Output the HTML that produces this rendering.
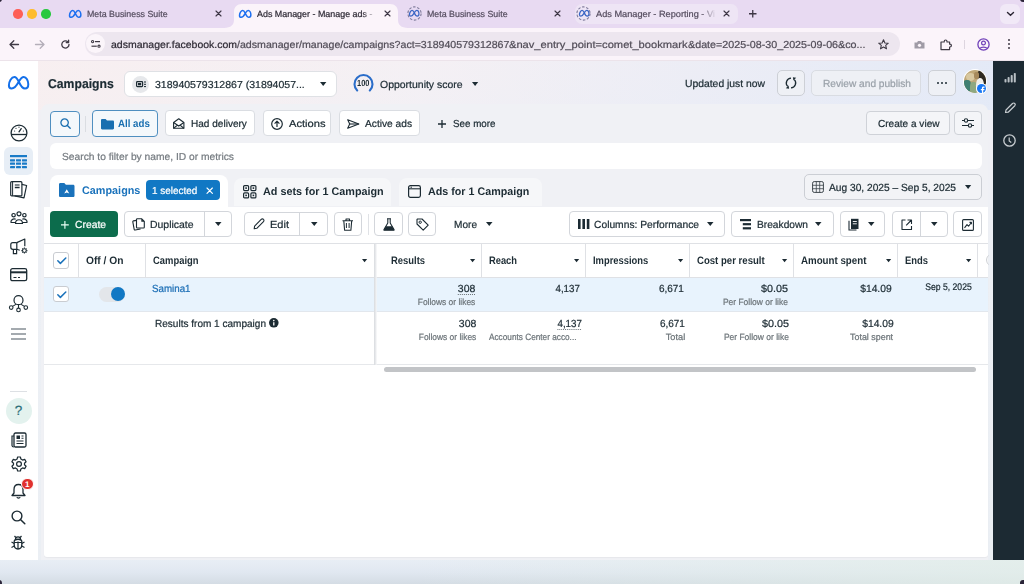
<!DOCTYPE html>
<html><head><meta charset="utf-8"><style>
html,body{margin:0;padding:0;}
body{width:1024px;height:584px;overflow:hidden;position:relative;background:#e4e9ef;font-family:"Liberation Sans", sans-serif;}
.t{position:absolute;white-space:nowrap;font-family:"Liberation Sans", sans-serif;text-rendering:geometricPrecision;} .t.r{-webkit-text-stroke:0.22px currentColor;} .t.b{-webkit-text-stroke:0px currentColor;}
svg{overflow:visible}
</style></head><body>
<div style="position:absolute;left:0px;top:560px;width:1024px;height:24px;background:linear-gradient(180deg,#e8eef5 0%,#e1e8f1 50%,#d4dce4 100%);"></div><div style="position:absolute;left:0px;top:560px;width:1024px;height:24px;background:linear-gradient(90deg,rgba(226,232,240,0) 0%,rgba(226,232,240,0) 40%,rgba(226,238,232,0.75) 100%);"></div><div style="position:absolute;left:-4px;top:580px;width:6px;height:6px;border-radius:50%;background:#2a2438;"></div><div style="position:absolute;left:1020px;top:580px;width:6px;height:6px;border-radius:50%;background:#2a2438;"></div><div style="position:absolute;left:38px;top:60px;width:955px;height:500px;background:linear-gradient(180deg,#f4f0f4 0px,#f0f0f5 60px,#edf0f5 200px,#ebeff4 500px);"></div><div style="position:absolute;left:38px;top:60px;width:955px;height:50px;background:linear-gradient(90deg,rgba(250,238,238,0.6) 0%,rgba(246,240,244,0.3) 40%,rgba(226,233,247,0.9) 100%);"></div><div style="position:absolute;left:0px;top:0px;width:1024px;height:28px;background:#e8daf2;"></div><div style="position:absolute;left:-4px;top:-4px;width:6px;height:6px;border-radius:50%;background:#2a2438;"></div><div style="position:absolute;left:1020px;top:-4px;width:6px;height:6px;border-radius:50%;background:#2a2438;"></div><div style="position:absolute;left:13.2px;top:9.2px;width:9.4px;height:9.4px;border-radius:50%;background:#fe5f57;"></div><div style="position:absolute;left:27.2px;top:9.2px;width:9.4px;height:9.4px;border-radius:50%;background:#febc2e;"></div><div style="position:absolute;left:41.2px;top:9.2px;width:9.4px;height:9.4px;border-radius:50%;background:#28c840;"></div><svg style="position:absolute;left:69.3px;top:9.8px;" width="12.4" height="7.9" viewBox="0 0 21.2 13.5"><path d="M6.4 0.9C8.3 0.9 9.5 3 10.7 5.5C12.5 9.5 14.5 12.6 17 12.6C19.2 12.6 20.3 10.5 20.3 8.3C20.3 4.5 18.3 0.9 15.8 0.9C13.5 0.9 12 3.5 10.7 5.8C9 9 6.5 12.6 3.6 12.6C2 12.6 0.9 11.3 0.9 9.2C0.9 5.5 3.5 0.9 6.4 0.9Z" fill="none" stroke="#1d6ff0" stroke-width="2.6" stroke-linejoin="round"/></svg><span class="t r" style="transform:scaleX(0.9909);transform-origin:left center;left:87.4px;top:10px;font-size:8.93px;line-height:8.93px;font-weight:400;color:#564e60;">Meta Business Suite</span><svg style="position:absolute;left:215.7px;top:11.4px;" width="5.0" height="5.0" viewBox="0 0 5.0 5.0"><path d="M0 0L5.0 5.0M5.0 0L0 5.0" stroke="#3d3645" stroke-width="1.15" stroke-linecap="round"/></svg><svg style="position:absolute;left:222px;top:3px" width="188" height="26" viewBox="0 0 188 26"><path d="M0 25 C6 25 12 24 12 17 L12 9 C12 4 15 1 20 1 L168 1 C173 1 176 4 176 9 L176 17 C176 24 182 25 188 25 L188 26 L0 26 Z" fill="#fbf4fa"/></svg><svg style="position:absolute;left:238.8px;top:9.6px;" width="12.4" height="7.9" viewBox="0 0 21.2 13.5"><path d="M6.4 0.9C8.3 0.9 9.5 3 10.7 5.5C12.5 9.5 14.5 12.6 17 12.6C19.2 12.6 20.3 10.5 20.3 8.3C20.3 4.5 18.3 0.9 15.8 0.9C13.5 0.9 12 3.5 10.7 5.8C9 9 6.5 12.6 3.6 12.6C2 12.6 0.9 11.3 0.9 9.2C0.9 5.5 3.5 0.9 6.4 0.9Z" fill="none" stroke="#1d6ff0" stroke-width="2.6" stroke-linejoin="round"/></svg><span class="t r" style="transform:scaleX(0.9986);transform-origin:left center;left:256.6px;top:10px;font-size:8.93px;line-height:8.93px;font-weight:400;color:#2f2b36;-webkit-mask-image:linear-gradient(90deg,#000 91%,rgba(0,0,0,0.25) 100%);">Ads Manager - Manage ads -</span><svg style="position:absolute;left:385.0px;top:10.9px;" width="5.0" height="5.0" viewBox="0 0 5.0 5.0"><path d="M0 0L5.0 5.0M5.0 0L0 5.0" stroke="#3d3645" stroke-width="1.15" stroke-linecap="round"/></svg><svg style="position:absolute;left:407.1px;top:5.800000000000001px;" width="15" height="15" viewBox="0 0 15 15"><circle cx="7.5" cy="7.5" r="6.6" fill="none" stroke="#7d7a9a" stroke-width="1.1" stroke-dasharray="2.6 1.6"/></svg><svg style="position:absolute;left:409.40000000000003px;top:10.0px;" width="10.4" height="6.6" viewBox="0 0 21.2 13.5"><path d="M6.4 0.9C8.3 0.9 9.5 3 10.7 5.5C12.5 9.5 14.5 12.6 17 12.6C19.2 12.6 20.3 10.5 20.3 8.3C20.3 4.5 18.3 0.9 15.8 0.9C13.5 0.9 12 3.5 10.7 5.8C9 9 6.5 12.6 3.6 12.6C2 12.6 0.9 11.3 0.9 9.2C0.9 5.5 3.5 0.9 6.4 0.9Z" fill="none" stroke="#3a66c4" stroke-width="2.6" stroke-linejoin="round"/></svg><span class="t r" style="transform:scaleX(0.9909);transform-origin:left center;left:426.6px;top:10px;font-size:8.93px;line-height:8.93px;font-weight:400;color:#564e60;">Meta Business Suite</span><svg style="position:absolute;left:554.5px;top:11.1px;" width="5.0" height="5.0" viewBox="0 0 5.0 5.0"><path d="M0 0L5.0 5.0M5.0 0L0 5.0" stroke="#3d3645" stroke-width="1.15" stroke-linecap="round"/></svg><div style="position:absolute;left:575px;top:4px;width:163px;height:20px;background:#eee5f5;border-radius:7px;"></div><svg style="position:absolute;left:576.2px;top:6.199999999999999px;" width="15" height="15" viewBox="0 0 15 15"><circle cx="7.5" cy="7.5" r="6.6" fill="none" stroke="#7d7a9a" stroke-width="1.1" stroke-dasharray="2.6 1.6"/></svg><svg style="position:absolute;left:578.5px;top:10.399999999999999px;" width="10.4" height="6.6" viewBox="0 0 21.2 13.5"><path d="M6.4 0.9C8.3 0.9 9.5 3 10.7 5.5C12.5 9.5 14.5 12.6 17 12.6C19.2 12.6 20.3 10.5 20.3 8.3C20.3 4.5 18.3 0.9 15.8 0.9C13.5 0.9 12 3.5 10.7 5.8C9 9 6.5 12.6 3.6 12.6C2 12.6 0.9 11.3 0.9 9.2C0.9 5.5 3.5 0.9 6.4 0.9Z" fill="none" stroke="#3a66c4" stroke-width="2.6" stroke-linejoin="round"/></svg><span class="t r" style="transform:scaleX(1.0313);transform-origin:left center;left:596px;top:10px;font-size:8.93px;line-height:8.93px;font-weight:400;color:#564e60;-webkit-mask-image:linear-gradient(90deg,#000 88%,rgba(0,0,0,0.15) 100%);">Ads Manager - Reporting - Vi</span><svg style="position:absolute;left:723.8px;top:11.1px;" width="5.0" height="5.0" viewBox="0 0 5.0 5.0"><path d="M0 0L5.0 5.0M5.0 0L0 5.0" stroke="#3d3645" stroke-width="1.15" stroke-linecap="round"/></svg><svg style="position:absolute;left:749px;top:10px;" width="7.5" height="7.5" viewBox="0 0 7.5 7.5"><path d="M3.75 0V7.5M0 3.75H7.5" stroke="#3d3645" stroke-width="1.3"/></svg><div style="position:absolute;left:1000px;top:4px;width:20px;height:19.5px;background:#f1e9f7;border-radius:6px;"></div><svg style="position:absolute;left:1006.5px;top:11.8px;" width="7" height="4" viewBox="0 0 7 4"><path d="M0.5 0.5L3.5 3.3L6.5 0.5" fill="none" stroke="#2b2633" stroke-width="1.4" stroke-linecap="round"/></svg><div style="position:absolute;left:0px;top:28px;width:1024px;height:32px;background:#fbf4fa;"></div><div style="position:absolute;left:0px;top:59.5px;width:1024px;height:1.0px;background:#ece3ea;"></div><svg style="position:absolute;left:9px;top:39.5px;" width="10" height="9" viewBox="0 0 10 9"><path d="M9.5 4.5H1M4.8 0.8L1 4.5L4.8 8.2" fill="none" stroke="#3f3a45" stroke-width="1.3" stroke-linecap="round" stroke-linejoin="round"/></svg><svg style="position:absolute;left:34.5px;top:39.5px;" width="10" height="9" viewBox="0 0 10 9"><path d="M0.5 4.5H9M5.2 0.8L9 4.5L5.2 8.2" fill="none" stroke="#b4aeb9" stroke-width="1.3" stroke-linecap="round" stroke-linejoin="round"/></svg><svg style="position:absolute;left:60.5px;top:39.5px;" width="9" height="9" viewBox="0 0 9 9"><path d="M8 4.5A3.6 3.6 0 1 1 6.9 1.9" fill="none" stroke="#3f3a45" stroke-width="1.3" stroke-linecap="round"/><path d="M7.6 0.2V2.6H5.2" fill="none" stroke="#3f3a45" stroke-width="1.3" stroke-linecap="round" stroke-linejoin="round"/></svg><div style="position:absolute;left:84.7px;top:32px;width:815.3px;height:24px;background:#ede6ef;border-radius:12px;"></div><div style="position:absolute;left:86.1px;top:34.3px;width:19px;height:19px;border-radius:50%;background:#fbf5fa;"></div><svg style="position:absolute;left:91px;top:40px;" width="10" height="8" viewBox="0 0 10 8"><circle cx="1.6" cy="1.6" r="1.1" fill="none" stroke="#3f3a45" stroke-width="1.1"/><path d="M4 1.6H9" stroke="#3f3a45" stroke-width="1.2"/><circle cx="8" cy="6.2" r="1.1" fill="none" stroke="#3f3a45" stroke-width="1.1"/><path d="M0.5 6.2H5.8" stroke="#3f3a45" stroke-width="1.2"/></svg><span class="t r" style="transform:scaleX(1.0324);transform-origin:left center;left:110.5px;top:41px;font-size:10.18px;line-height:10.18px;font-weight:400;color:#2e2a34;">adsmanager.facebook.com</span><span class="t r" style="transform:scaleX(1.0437);transform-origin:left center;left:236.6px;top:41px;font-size:10.18px;line-height:10.18px;font-weight:400;color:#524d58;">/adsmanager/manage/campaigns?act=318940579312867</span><span class="t r" style="transform:scaleX(1.0941);transform-origin:left center;left:509px;top:41px;font-size:10.18px;line-height:10.18px;font-weight:400;color:#524d58;">&amp;nav_entry_point=comet_bookmark</span><span class="t r" style="transform:scaleX(1.0550);transform-origin:left center;left:687.5px;top:41px;font-size:10.18px;line-height:10.18px;font-weight:400;color:#524d58;">&amp;date=2025-08-30_2025-09-06&amp;co...</span><svg style="position:absolute;left:878px;top:38.5px;" width="11" height="11" viewBox="0 0 11 11"><path d="M5.5 0.8L6.9 4L10.3 4.2L7.7 6.4L8.5 9.8L5.5 8L2.5 9.8L3.3 6.4L0.7 4.2L4.1 4Z" fill="none" stroke="#3f3a45" stroke-width="1.1" stroke-linejoin="round"/></svg><svg style="position:absolute;left:913.5px;top:39.5px;" width="11" height="9" viewBox="0 0 11 9"><path d="M0.5 2.5H3L4 1H7L8 2.5H10.5V8.5H0.5Z" fill="#a09ba6"/><circle cx="5.5" cy="5.3" r="1.6" fill="#fcf6fb"/></svg><svg style="position:absolute;left:940px;top:38.5px;" width="12" height="11.5" viewBox="0 0 12 11.5"><path d="M1 3H4.2V2.4A1.4 1.4 0 0 1 7 2.4V3H9.6V5.2H10A1.4 1.4 0 0 1 10 8H9.6V10.6H1Z" fill="none" stroke="#3f3a45" stroke-width="1.2" stroke-linejoin="round"/></svg><div style="position:absolute;left:963.7px;top:39.5px;width:1.0px;height:9.0px;background:#ddd5df;"></div><svg style="position:absolute;left:977px;top:37.5px;" width="13" height="13" viewBox="0 0 13 13"><circle cx="6.5" cy="6.5" r="5.6" fill="none" stroke="#7040b8" stroke-width="1.3"/><circle cx="6.5" cy="5" r="1.9" fill="none" stroke="#7040b8" stroke-width="1.2"/><path d="M3 10.3C4 8.6 9 8.6 10 10.3" fill="none" stroke="#7040b8" stroke-width="1.2"/></svg><div style="position:absolute;left:1007.8px;top:38.8px;width:2.4px;height:2.4px;border-radius:50%;background:#3f3a45;"></div><div style="position:absolute;left:1007.8px;top:42.8px;width:2.4px;height:2.4px;border-radius:50%;background:#3f3a45;"></div><div style="position:absolute;left:1007.8px;top:46.8px;width:2.4px;height:2.4px;border-radius:50%;background:#3f3a45;"></div><div style="position:absolute;left:0px;top:60.5px;width:38px;height:499.5px;background:#ffffff;"></div><svg style="position:absolute;left:7.9px;top:75.6px;" width="21.2" height="13.5" viewBox="0 0 21.2 13.5"><path d="M6.4 0.9C8.3 0.9 9.5 3 10.7 5.5C12.5 9.5 14.5 12.6 17 12.6C19.2 12.6 20.3 10.5 20.3 8.3C20.3 4.5 18.3 0.9 15.8 0.9C13.5 0.9 12 3.5 10.7 5.8C9 9 6.5 12.6 3.6 12.6C2 12.6 0.9 11.3 0.9 9.2C0.9 5.5 3.5 0.9 6.4 0.9Z" fill="none" stroke="#1470ea" stroke-width="2.0" stroke-linejoin="round"/></svg><svg style="position:absolute;left:9.5px;top:123.5px;" width="18" height="18" viewBox="0 0 18 18"><circle cx="9" cy="9" r="7.9" fill="none" stroke="#1c2b33" stroke-width="1.3"/><path d="M1.3 10.5H16.7" stroke="#1c2b33" stroke-width="1.3"/><path d="M9 7.8L11.2 4.6" stroke="#1c2b33" stroke-width="1.3" stroke-linecap="round"/><circle cx="4.6" cy="7" r="0.6" fill="#1c2b33"/><circle cx="6" cy="4.3" r="0.6" fill="#1c2b33"/><circle cx="9" cy="3.2" r="0.6" fill="#1c2b33"/><circle cx="13.4" cy="7" r="0.6" fill="#1c2b33"/></svg><div style="position:absolute;left:4.3px;top:146.8px;width:28.400000000000002px;height:27.799999999999983px;background:#e7eef6;border-radius:6px;"></div><svg style="position:absolute;left:10px;top:155px;" width="17" height="13.2" viewBox="0 0 17 13.2"><rect x="0" y="0" width="17" height="2.2" fill="#1a7bc7"/><rect x="0" y="4.2" width="5" height="2.2" rx="0.4" fill="#1a7bc7"/><rect x="6" y="4.2" width="5" height="2.2" rx="0.4" fill="#1a7bc7"/><rect x="12" y="4.2" width="5" height="2.2" rx="0.4" fill="#1a7bc7"/><rect x="0" y="7.6" width="5" height="2.2" rx="0.4" fill="#1a7bc7"/><rect x="6" y="7.6" width="5" height="2.2" rx="0.4" fill="#1a7bc7"/><rect x="12" y="7.6" width="5" height="2.2" rx="0.4" fill="#1a7bc7"/><rect x="0" y="11" width="5" height="2.2" rx="0.4" fill="#1a7bc7"/><rect x="6" y="11" width="5" height="2.2" rx="0.4" fill="#1a7bc7"/><rect x="12" y="11" width="5" height="2.2" rx="0.4" fill="#1a7bc7"/></svg><svg style="position:absolute;left:10px;top:180.6px;" width="17.5" height="17.5" viewBox="0 0 17.5 17.5"><rect x="0.7" y="0.7" width="11.2" height="14.2" rx="1" fill="none" stroke="#1c2b33" stroke-width="1.2"/><path d="M2.6 0.7V14.9" stroke="#1c2b33" stroke-width="1"/><path d="M4.8 4H9.6" stroke="#1c2b33" stroke-width="1.1"/><path d="M4.8 6.5H9.6" stroke="#1c2b33" stroke-width="1.5"/><path d="M11.9 3.4L16.6 4.5L14 16.8L4.6 14.9" fill="none" stroke="#1c2b33" stroke-width="1.2" stroke-linejoin="round"/></svg><svg style="position:absolute;left:9.5px;top:211px;" width="18" height="14" viewBox="0 0 18 14"><circle cx="9" cy="2.8" r="2" fill="none" stroke="#1c2b33" stroke-width="1.2"/><circle cx="3.6" cy="4.2" r="1.7" fill="none" stroke="#1c2b33" stroke-width="1.2"/><circle cx="14.4" cy="4.2" r="1.7" fill="none" stroke="#1c2b33" stroke-width="1.2"/><path d="M5.5 12.5C5.5 7.5 12.5 7.5 12.5 12.5Z" fill="none" stroke="#1c2b33" stroke-width="1.2" stroke-linejoin="round"/><path d="M0.8 11.5C0.8 7.5 5 7.5 5.6 8.4M17.2 11.5C17.2 7.5 13 7.5 12.4 8.4" fill="none" stroke="#1c2b33" stroke-width="1.2"/><path d="M0.8 11.5H5.5M12.5 11.5H17.2" stroke="#1c2b33" stroke-width="1.2"/></svg><svg style="position:absolute;left:10px;top:237.5px;" width="17" height="17" viewBox="0 0 17 17"><path d="M6.8 4.6H2.8C1.7 4.6 0.8 5.5 0.8 6.6V9.3C0.8 10.4 1.7 11.3 2.8 11.3H6.8" fill="none" stroke="#1c2b33" stroke-width="1.2"/><path d="M6.8 4.6L14.8 1V8.2M6.8 11.3L9.8 12.3" fill="none" stroke="#1c2b33" stroke-width="1.2" stroke-linejoin="round"/><path d="M6.8 4.6V11.3M3.4 11.3V15.6H6.6V11.3" fill="none" stroke="#1c2b33" stroke-width="1.2"/><circle cx="14.4" cy="12.6" r="1.9" fill="none" stroke="#1c2b33" stroke-width="1.1"/><path d="M14.4 9.6V10.5M14.4 14.7V15.6M11.4 12.6H12.3M16.5 12.6H17.4M12.3 10.5L12.9 11.1M15.9 14.1L16.5 14.7M16.5 10.5L15.9 11.1M12.9 14.1L12.3 14.7" stroke="#1c2b33" stroke-width="1.1"/></svg><svg style="position:absolute;left:10px;top:268px;" width="17.5" height="13.5" viewBox="0 0 17.5 13.5"><rect x="0.7" y="0.7" width="16" height="12" rx="1.8" fill="none" stroke="#1c2b33" stroke-width="1.3"/><path d="M0.7 4.3H16.7" stroke="#1c2b33" stroke-width="2"/><path d="M3.5 9.5H6.5M8 9.5H10" stroke="#1c2b33" stroke-width="1.2"/></svg><svg style="position:absolute;left:9px;top:293px;" width="19" height="19" viewBox="0 0 19 19"><circle cx="9.5" cy="7.2" r="4.5" fill="none" stroke="#1c2b33" stroke-width="1.2"/><path d="M9.5 11.7V15.1M7.3 11.1L3.6 13.4M11.7 11.1L15.4 13.4" stroke="#1c2b33" stroke-width="1.1"/><circle cx="2.2" cy="14.6" r="1.8" fill="#fff" stroke="#1c2b33" stroke-width="1.1"/><circle cx="9.5" cy="16.9" r="1.8" fill="#fff" stroke="#1c2b33" stroke-width="1.1"/><circle cx="16.8" cy="14.6" r="1.8" fill="#fff" stroke="#1c2b33" stroke-width="1.1"/></svg><svg style="position:absolute;left:11px;top:327.5px;" width="15" height="12" viewBox="0 0 15 12"><path d="M0 1H15M0 6H15M0 11H15" stroke="#4b5760" stroke-width="1.2"/></svg><div style="position:absolute;left:10px;top:391px;width:17px;height:1px;background:#dde0e4;"></div><div style="position:absolute;left:5.5px;top:397.8px;width:26px;height:26px;border-radius:50%;background:#e3f2ee;"></div><span class="t r" style="left:18.6px;top:404px;font-size:13.44px;line-height:13.44px;font-weight:400;color:#2b6e78;transform:translateX(-50%);">?</span><svg style="position:absolute;left:10.5px;top:431.5px;" width="16" height="16" viewBox="0 0 16 16"><rect x="3" y="1" width="12" height="14" rx="1.5" fill="none" stroke="#1c2b33" stroke-width="1.3"/><path d="M3 4H1V13.5C1 14.5 2 15 3 15" fill="none" stroke="#1c2b33" stroke-width="1.2"/><rect x="5.5" y="3.5" width="3.5" height="3.5" fill="#1c2b33"/><path d="M5.5 9H12.5M5.5 11.5H12.5M10.5 4H12.5M10.5 6.3H12.5" stroke="#1c2b33" stroke-width="1.1"/></svg><svg style="position:absolute;left:10.5px;top:456.2px;" width="16" height="16" viewBox="0 0 16 16"><path d="M6.6 1H9.4L9.9 3.1L11.6 4.1L13.7 3.4L15.1 5.8L13.5 7.3V8.7L15.1 10.2L13.7 12.6L11.6 11.9L9.9 12.9L9.4 15H6.6L6.1 12.9L4.4 11.9L2.3 12.6L0.9 10.2L2.5 8.7V7.3L0.9 5.8L2.3 3.4L4.4 4.1L6.1 3.1Z" fill="none" stroke="#1c2b33" stroke-width="1.2" stroke-linejoin="round"/><circle cx="8" cy="8" r="2.4" fill="none" stroke="#1c2b33" stroke-width="1.2"/></svg><svg style="position:absolute;left:10.5px;top:482.5px;" width="15" height="16" viewBox="0 0 15 16"><path d="M7.5 1.5C4.5 1.5 3 3.8 3 6.5V10L1 12.5H14L12 10V6.5C12 3.8 10.5 1.5 7.5 1.5Z" fill="none" stroke="#1c2b33" stroke-width="1.3" stroke-linejoin="round"/><path d="M5.8 14.3C6.3 15.3 8.7 15.3 9.2 14.3" fill="none" stroke="#1c2b33" stroke-width="1.2"/></svg><div style="position:absolute;left:21px;top:477.8px;width:12.5px;height:12.5px;border-radius:50%;background:#e0312e;border:1px solid #fff;box-sizing:border-box;"></div><span class="t b" style="left:27.2px;top:481px;font-size:8.16px;line-height:8.16px;font-weight:700;color:#ffffff;transform:translateX(-50%);">1</span><svg style="position:absolute;left:11px;top:510px;" width="15" height="15" viewBox="0 0 15 15"><circle cx="6" cy="6" r="4.9" fill="none" stroke="#1c2b33" stroke-width="1.4"/><path d="M9.7 9.7L13.8 13.8" stroke="#1c2b33" stroke-width="1.5" stroke-linecap="round"/></svg><svg style="position:absolute;left:11px;top:534.5px;" width="14" height="15" viewBox="0 0 14 15"><path d="M3.2 6.5C3.2 3.5 10.8 3.5 10.8 6.5V9.5C10.8 12.5 9 14 7 14C5 14 3.2 12.5 3.2 9.5Z" fill="none" stroke="#1c2b33" stroke-width="1.3"/><path d="M4.5 4.2C4.5 1.2 9.5 1.2 9.5 4.2" fill="none" stroke="#1c2b33" stroke-width="1.3"/><path d="M7 6.5V14M3.2 7.5H10.8M3.2 8.5L0.5 7M3.2 11L0.5 12.5M10.8 8.5L13.5 7M10.8 11L13.5 12.5M4.8 2.5L3.5 1M9.2 2.5L10.5 1" stroke="#1c2b33" stroke-width="1.2"/></svg><div style="position:absolute;left:993.3px;top:60.5px;width:30.700000000000045px;height:499.5px;background:#1c2a33;"></div><svg style="position:absolute;left:1003.5px;top:72.5px;" width="12" height="9.5" viewBox="0 0 12 9.5"><rect x="0.5" y="6" width="2" height="3.5" rx="0.8" fill="#b9c0c5"/><rect x="3.6" y="4" width="2" height="5.5" rx="0.8" fill="#b9c0c5"/><rect x="6.7" y="2" width="2" height="7.5" rx="0.8" fill="#b9c0c5"/><rect x="9.8" y="0" width="2" height="9.5" rx="0.8" fill="#b9c0c5"/></svg><svg style="position:absolute;left:1003.5px;top:102px;" width="12" height="12" viewBox="0 0 12 12"><path d="M1.5 10.5L2 8L8.5 1.5C9.2 0.8 10.2 0.8 10.8 1.5C11.4 2.1 11.4 3 10.8 3.7L4.2 10.2Z" fill="none" stroke="#c8cdd1" stroke-width="1.2" stroke-linejoin="round"/></svg><svg style="position:absolute;left:1002.5px;top:133.5px;" width="13" height="13" viewBox="0 0 13 13"><circle cx="6.5" cy="6.5" r="5.7" fill="none" stroke="#c8cdd1" stroke-width="1.3"/><path d="M6.2 3.5V7L8.3 8.6" fill="none" stroke="#c8cdd1" stroke-width="1.2"/></svg><span class="t b" style="transform:scaleX(0.9491);transform-origin:left center;left:48.2px;top:78px;font-size:12.86px;line-height:12.86px;font-weight:700;color:#1c2b33;-webkit-text-stroke:0.2px #1c2b33;">Campaigns</span><div style="position:absolute;left:123.6px;top:70.5px;width:213.1px;height:26.700000000000003px;background:#fff;border:1px solid #dfe1e5;border-radius:6px;box-sizing:border-box;"></div><div style="position:absolute;left:132px;top:75.5px;width:17px;height:17px;border-radius:50%;background:#e6e8eb;"></div><svg style="position:absolute;left:135.5px;top:80.5px;" width="10" height="7" viewBox="0 0 10 7"><rect x="0.6" y="0.6" width="6" height="5" rx="0.8" fill="none" stroke="#1c2b33" stroke-width="1.2"/><rect x="2" y="2" width="3.2" height="2.3" fill="#1c2b33"/><path d="M8 1H10M8 3.3H10M8 5.6H10" stroke="#1c2b33" stroke-width="1"/></svg><span class="t r" style="transform:scaleX(1.0440);transform-origin:left center;left:155.2px;top:81px;font-size:10.08px;line-height:10.08px;font-weight:400;color:#1c2b33;">318940579312867 (31894057...</span><svg style="position:absolute;left:320.0px;top:82.4px;" width="6.4" height="4" viewBox="0 0 6.4 4"><path d="M0 0H6.4L3.2 4Z" fill="#1c2b33"/></svg><svg style="position:absolute;left:352.5px;top:73px;" width="21" height="21" viewBox="0 0 21 21"><path d="M4.2 17.5A9 9 0 1 1 16.8 17.5" fill="none" stroke="#2b6dc9" stroke-width="2.1" stroke-linecap="round"/></svg><span class="t b" style="transform:scaleX(0.8416);transform-origin:left center;left:356.8px;top:79px;font-size:8.83px;line-height:8.83px;font-weight:700;color:#1c2b33;">100</span><span class="t r" style="transform:scaleX(1.0102);transform-origin:left center;left:380.4px;top:81px;font-size:10.37px;line-height:10.37px;font-weight:400;color:#1c2b33;">Opportunity score</span><svg style="position:absolute;left:471.9px;top:82.2px;" width="6.2" height="4" viewBox="0 0 6.2 4"><path d="M0 0H6.2L3.1 4Z" fill="#1c2b33"/></svg><span class="t r" style="transform:scaleX(0.9992);transform-origin:left center;left:684.9px;top:80px;font-size:10.37px;line-height:10.37px;font-weight:400;color:#1c2b33;">Updated just now</span><div style="position:absolute;left:776.6px;top:70px;width:28.399999999999977px;height:25.5px;background:#eef0f5;border:1px solid #cdd0d6;border-radius:5px;box-sizing:border-box;"></div><svg style="position:absolute;left:785px;top:76.5px;" width="12" height="12" viewBox="0 0 12 12"><path d="M6 1.1A4.9 4.9 0 0 0 2.7 9.4M6 10.9A4.9 4.9 0 0 0 9.3 2.6" fill="none" stroke="#1c2b33" stroke-width="1.3"/><path d="M11.2 0.8L8.4 3.6L7.9 0.3Z" fill="#1c2b33"/><path d="M0.8 11.2L3.6 8.4L4.1 11.7Z" fill="#1c2b33"/></svg><div style="position:absolute;left:811px;top:70px;width:110.29999999999995px;height:25.5px;background:#eef0f5;border:1px solid #d9dce2;border-radius:5px;box-sizing:border-box;"></div><span class="t r" style="transform:scaleX(0.9795);transform-origin:left center;left:822.5px;top:80px;font-size:10.37px;line-height:10.37px;font-weight:400;color:#9aa1a9;">Review and publish</span><div style="position:absolute;left:928.4px;top:70px;width:27.600000000000023px;height:25.5px;background:#eef0f5;border:1px solid #cdd0d6;border-radius:5px;box-sizing:border-box;"></div><div style="position:absolute;left:937.2px;top:82px;width:2px;height:2px;border-radius:50%;background:#1c2b33;"></div><div style="position:absolute;left:941.2px;top:82px;width:2px;height:2px;border-radius:50%;background:#1c2b33;"></div><div style="position:absolute;left:945.2px;top:82px;width:2px;height:2px;border-radius:50%;background:#1c2b33;"></div><div style="position:absolute;left:962.9px;top:69.4px;width:24px;height:24px;border-radius:50%;background:#fff;overflow:hidden;"><div style="position:absolute;left:0.8px;top:0.8px;width:22.4px;height:22.4px;border-radius:50%;overflow:hidden;background:#bfa878;"><div style="position:absolute;left:13px;top:-2px;width:14px;height:16px;background:#2e2a22;border-radius:50%;"></div><div style="position:absolute;left:2px;top:3px;width:9px;height:8px;background:#d8c8a0;border-radius:50%;"></div><div style="position:absolute;left:-1px;top:10px;width:8px;height:12px;background:#3f7f72;border-radius:40%;"></div><div style="position:absolute;left:6px;top:12px;width:7px;height:12px;background:#8fa880;border-radius:40%;"></div><div style="position:absolute;left:12px;top:8px;width:8px;height:16px;background:#f1efe9;border-radius:45%;"></div><div style="position:absolute;left:10px;top:2px;width:5px;height:7px;background:#a68a5c;border-radius:40%;"></div></div></div><div style="position:absolute;left:977.3px;top:84.2px;width:9px;height:9px;border-radius:50%;background:#1877f2;box-shadow:0 0 0 0.9px #fff;"></div><svg style="position:absolute;left:979.6px;top:85.6px;" width="5" height="7.6" viewBox="0 0 5 7.6"><path d="M3.2 7.6V4.3H4.3L4.5 3.1H3.2V2.4C3.2 2 3.4 1.8 3.8 1.8H4.6V0.7C4.3 0.6 3.9 0.6 3.5 0.6C2.5 0.6 1.9 1.2 1.9 2.2V3.1H0.8V4.3H1.9V7.6Z" fill="#fff"/></svg><div style="position:absolute;left:41.3px;top:104.3px;width:946.7px;height:455.7px;background:#f0f1f5;border-radius:8px 8px 0 0;"></div><div style="position:absolute;left:50px;top:111px;width:30.299999999999997px;height:25.69999999999999px;background:#f4f8fb;border:1px solid #4f8fc0;border-radius:4px;box-sizing:border-box;"></div><svg style="position:absolute;left:59.8px;top:118.3px;" width="11" height="11" viewBox="0 0 11 11"><circle cx="4.6" cy="4.6" r="3.7" fill="none" stroke="#1a6fb0" stroke-width="1.3"/><path d="M7.4 7.4L10.2 10.2" stroke="#1a6fb0" stroke-width="1.4" stroke-linecap="round"/></svg><div style="position:absolute;left:85px;top:116px;width:1px;height:16px;background:#dadde2;"></div><div style="position:absolute;left:91.8px;top:110.3px;width:65.89999999999999px;height:26.700000000000003px;background:#f4f8fb;border:1px solid #4f8fc0;border-radius:4px;box-sizing:border-box;"></div><svg style="position:absolute;left:100.5px;top:118.8px;" width="13" height="10.5" viewBox="0 0 13 10.5"><path d="M0 1.2C0 0.5 0.5 0 1.2 0H4.6L6 1.6H11.8C12.5 1.6 13 2.1 13 2.8V9.3C13 10 12.5 10.5 11.8 10.5H1.2C0.5 10.5 0 10 0 9.3Z" fill="#1a6fb0"/></svg><span class="t b" style="transform:scaleX(0.9192);transform-origin:left center;left:118.3px;top:119px;font-size:10.56px;line-height:10.56px;font-weight:700;color:#1a6fb0;">All ads</span><div style="position:absolute;left:164.9px;top:110.4px;width:90.29999999999998px;height:25.599999999999994px;background:#fff;border:1px solid #dadde2;border-radius:4px;box-sizing:border-box;"></div><svg style="position:absolute;left:173px;top:118px;" width="11.5" height="11" viewBox="0 0 11.5 11"><path d="M0.6 4.5L5.75 0.7L10.9 4.5V10.3H0.6Z" fill="none" stroke="#1c2b33" stroke-width="1.1" stroke-linejoin="round"/><path d="M0.6 4.5L5.75 8L10.9 4.5M0.6 10.3L4.5 7M10.9 10.3L7 7" fill="none" stroke="#1c2b33" stroke-width="1.1"/></svg><span class="t r" style="transform:scaleX(0.9886);transform-origin:left center;left:190.8px;top:120px;font-size:10.18px;line-height:10.18px;font-weight:400;color:#1c2b33;">Had delivery</span><div style="position:absolute;left:262.8px;top:110.4px;width:68.69999999999999px;height:25.599999999999994px;background:#fff;border:1px solid #dadde2;border-radius:4px;box-sizing:border-box;"></div><svg style="position:absolute;left:270.5px;top:117.5px;" width="12" height="12" viewBox="0 0 12 12"><circle cx="6" cy="6" r="5.3" fill="none" stroke="#1c2b33" stroke-width="1.2"/><path d="M6 9V3.3M3.6 5.6L6 3.2L8.4 5.6" fill="none" stroke="#1c2b33" stroke-width="1.2" stroke-linejoin="round"/></svg><span class="t r" style="transform:scaleX(1.0941);transform-origin:left center;left:288.5px;top:120px;font-size:10.18px;line-height:10.18px;font-weight:400;color:#1c2b33;">Actions</span><div style="position:absolute;left:338.7px;top:110.4px;width:81.5px;height:25.599999999999994px;background:#fff;border:1px solid #dadde2;border-radius:4px;box-sizing:border-box;"></div><svg style="position:absolute;left:346.5px;top:118.5px;" width="12.5" height="10" viewBox="0 0 12.5 10"><path d="M0.7 0.7L11.8 5L0.7 9.3L2.7 5Z" fill="none" stroke="#1c2b33" stroke-width="1.1" stroke-linejoin="round"/><path d="M2.7 5H11.8" stroke="#1c2b33" stroke-width="1.1"/></svg><span class="t r" style="transform:scaleX(1.0013);transform-origin:left center;left:365px;top:120px;font-size:10.18px;line-height:10.18px;font-weight:400;color:#1c2b33;">Active ads</span><svg style="position:absolute;left:437.5px;top:119.5px;" width="8" height="8" viewBox="0 0 8 8"><path d="M4 0V8M0 4H8" stroke="#1c2b33" stroke-width="1.3"/></svg><span class="t r" style="transform:scaleX(0.9635);transform-origin:left center;left:452.6px;top:120px;font-size:10.18px;line-height:10.18px;font-weight:400;color:#1c2b33;">See more</span><div style="position:absolute;left:866px;top:110.5px;width:83.70000000000005px;height:24.900000000000006px;background:#f4f5f8;border:1px solid #cfd2d8;border-radius:4px;box-sizing:border-box;"></div><span class="t r" style="transform:scaleX(0.9887);transform-origin:left center;left:877.5px;top:120px;font-size:10.18px;line-height:10.18px;font-weight:400;color:#1c2b33;">Create a view</span><div style="position:absolute;left:953.6px;top:110.5px;width:28.100000000000023px;height:24.900000000000006px;background:#f4f5f8;border:1px solid #cfd2d8;border-radius:4px;box-sizing:border-box;"></div><svg style="position:absolute;left:961.5px;top:117.5px;" width="12" height="10" viewBox="0 0 12 10"><path d="M0 2.5H12M0 7.5H12" stroke="#1c2b33" stroke-width="1.1"/><circle cx="4" cy="2.5" r="1.7" fill="#f4f5f8" stroke="#1c2b33" stroke-width="1.1"/><circle cx="8" cy="7.5" r="1.7" fill="#f4f5f8" stroke="#1c2b33" stroke-width="1.1"/></svg><div style="position:absolute;left:49.5px;top:143.2px;width:932.5px;height:25.400000000000006px;background:#fff;border-radius:6px;"></div><span class="t r" style="transform:scaleX(1.0075);transform-origin:left center;left:62px;top:153px;font-size:10.18px;line-height:10.18px;font-weight:400;color:#757b80;">Search to filter by name, ID or metrics</span><div style="position:absolute;left:49.5px;top:174.6px;width:178.5px;height:40px;background:#fff;border-radius:8px 8px 0 0;"></div><svg style="position:absolute;left:59.2px;top:182.6px;" width="15.5" height="14" viewBox="0 0 15.5 14"><path d="M0 1.3C0 0.6 0.6 0 1.3 0H5.3L6.9 1.8H14.2C14.9 1.8 15.5 2.4 15.5 3.1V12.7C15.5 13.4 14.9 14 14.2 14H1.3C0.6 14 0 13.4 0 12.7Z" fill="#1a72bb"/><path d="M5.2 10.6L7.75 6.2L10.3 10.6L7.75 9.6Z" fill="#fff"/></svg><span class="t b" style="transform:scaleX(0.9904);transform-origin:left center;left:81.6px;top:186px;font-size:10.94px;line-height:10.94px;font-weight:700;color:#1a72bb;">Campaigns</span><div style="position:absolute;left:146px;top:180.2px;width:73.80000000000001px;height:19.700000000000017px;background:#1178c4;border-radius:4px;"></div><span class="t r" style="transform:scaleX(0.9747);transform-origin:left center;left:151.8px;top:187px;font-size:10.18px;line-height:10.18px;font-weight:400;color:#ffffff;">1 selected</span><svg style="position:absolute;left:207.10000000000002px;top:187.5px;" width="5.4" height="5.4" viewBox="0 0 5.4 5.4"><path d="M0 0L5.4 5.4M5.4 0L0 5.4" stroke="#ffffff" stroke-width="1.15" stroke-linecap="round"/></svg><div style="position:absolute;left:234px;top:178.3px;width:157px;height:27.5px;background:#f6f7f9;border-radius:8px 8px 0 0;"></div><svg style="position:absolute;left:243px;top:185px;" width="13.5" height="13.5" viewBox="0 0 13.5 13.5"><rect x="0.6" y="0.6" width="5" height="5" rx="1" fill="none" stroke="#1c2b33" stroke-width="1.2"/><rect x="7.9" y="0.6" width="5" height="5" rx="1" fill="none" stroke="#1c2b33" stroke-width="1.2"/><rect x="0.6" y="7.9" width="5" height="5" rx="1" fill="none" stroke="#1c2b33" stroke-width="1.2"/><rect x="7.9" y="7.9" width="5" height="5" rx="1" fill="none" stroke="#1c2b33" stroke-width="1.2"/><rect x="2.3" y="2.3" width="1.6" height="1.6" fill="#1c2b33"/><rect x="9.6" y="9.6" width="1.6" height="1.6" fill="#1c2b33"/><rect x="2.3" y="9.6" width="1.6" height="1.6" fill="#1c2b33"/><rect x="9.6" y="2.3" width="1.6" height="1.6" fill="#1c2b33"/></svg><span class="t b" style="transform:scaleX(0.9880);transform-origin:left center;left:263px;top:187px;font-size:10.94px;line-height:10.94px;font-weight:700;color:#1c2b33;">Ad sets for 1 Campaign</span><div style="position:absolute;left:399px;top:178.3px;width:143px;height:27.5px;background:#f6f7f9;border-radius:8px 8px 0 0;"></div><svg style="position:absolute;left:407.6px;top:185px;" width="13" height="13" viewBox="0 0 13 13"><rect x="0.6" y="0.6" width="11.8" height="11.8" rx="1.8" fill="none" stroke="#1c2b33" stroke-width="1.2"/><path d="M0.6 3.8H12.4" stroke="#1c2b33" stroke-width="1.1"/><path d="M2.5 2.2H4" stroke="#1c2b33" stroke-width="1"/></svg><span class="t b" style="transform:scaleX(0.9804);transform-origin:left center;left:427.5px;top:187px;font-size:10.94px;line-height:10.94px;font-weight:700;color:#1c2b33;">Ads for 1 Campaign</span><div style="position:absolute;left:803.5px;top:174.3px;width:178.0px;height:25.299999999999983px;background:#f2f3f6;border:1px solid #cbced4;border-radius:5px;box-sizing:border-box;"></div><svg style="position:absolute;left:811.8px;top:181.2px;" width="12" height="12" viewBox="0 0 12 12"><rect x="0.6" y="0.6" width="10.8" height="10.8" rx="1.6" fill="none" stroke="#3d464c" stroke-width="1"/><path d="M0.6 4.3H11.4M0.6 7.7H11.4M4.3 0.6V11.4M7.7 0.6V11.4" stroke="#3d464c" stroke-width="0.8"/></svg><span class="t r" style="transform:scaleX(0.9843);transform-origin:left center;left:829px;top:184px;font-size:10.37px;line-height:10.37px;font-weight:400;color:#1c2b33;">Aug 30, 2025 – Sep 5, 2025</span><svg style="position:absolute;left:964.9px;top:185.0px;" width="6.2" height="4" viewBox="0 0 6.2 4"><path d="M0 0H6.2L3.1 4Z" fill="#1c2b33"/></svg><div style="position:absolute;left:43.9px;top:206.5px;width:944.1px;height:350px;background:#fff;border-radius:0 0 3px 3px;box-shadow:0 1px 1px rgba(0,0,0,0.04);"></div><div style="position:absolute;left:49.5px;top:200px;width:178.5px;height:10px;background:#fff;"></div><div style="position:absolute;left:50px;top:211.4px;width:68px;height:25.599999999999994px;background:#0c6c4c;border-radius:4px;"></div><svg style="position:absolute;left:60.6px;top:220.6px;" width="7.8" height="7.8" viewBox="0 0 7.8 7.8"><path d="M3.9 0V7.8M0 3.9H7.8" stroke="#eafff5" stroke-width="1.15"/></svg><span class="t r" style="transform:scaleX(0.9970);transform-origin:left center;left:75.4px;top:221px;font-size:10.37px;line-height:10.37px;font-weight:400;color:#ffffff;">Create</span><div style="position:absolute;left:123.8px;top:211.4px;width:108.60000000000001px;height:25.400000000000006px;background:#fff;border:1px solid #d3d6db;border-radius:4px;box-sizing:border-box;"></div><div style="position:absolute;left:204px;top:212px;width:1px;height:24.30000000000001px;background:#d3d6db;"></div><svg style="position:absolute;left:131.5px;top:217.5px;" width="13" height="13" viewBox="0 0 13 13"><path d="M5.3 0.7H9.5L12.3 3.5V9.2C12.3 9.7 11.9 10 11.5 10H5.3C4.8 10 4.5 9.7 4.5 9.2V1.5C4.5 1 4.8 0.7 5.3 0.7Z" fill="none" stroke="#1c2b33" stroke-width="1.1" stroke-linejoin="round"/><path d="M9.3 0.7V3.7H12.3Z" fill="#1c2b33"/><path d="M4.5 2.4L1.5 2.9C1 3 0.7 3.4 0.8 3.9L2.2 11.4C2.3 11.9 2.7 12.1 3.2 12L8.6 11" fill="none" stroke="#1c2b33" stroke-width="1.1" stroke-linejoin="round"/></svg><span class="t r" style="transform:scaleX(1.0069);transform-origin:left center;left:150px;top:221px;font-size:10.37px;line-height:10.37px;font-weight:400;color:#1c2b33;">Duplicate</span><svg style="position:absolute;left:215.05px;top:222.2px;" width="6.5" height="4" viewBox="0 0 6.5 4"><path d="M0 0H6.5L3.25 4Z" fill="#1c2b33"/></svg><div style="position:absolute;left:244.2px;top:211.5px;width:83.80000000000001px;height:24.900000000000006px;background:#fff;border:1px solid #d3d6db;border-radius:4px;box-sizing:border-box;"></div><div style="position:absolute;left:299.2px;top:212px;width:1.0px;height:24px;background:#d3d6db;"></div><svg style="position:absolute;left:253px;top:218px;" width="11.5" height="12" viewBox="0 0 11.5 12"><path d="M1.2 10.8L1.6 8.2L8.2 1.4C8.9 0.7 9.9 0.7 10.5 1.4C11.1 2 11.1 3 10.5 3.6L3.8 10.3Z" fill="none" stroke="#1c2b33" stroke-width="1.1" stroke-linejoin="round"/></svg><span class="t r" style="transform:scaleX(1.0639);transform-origin:left center;left:270.2px;top:221px;font-size:10.37px;line-height:10.37px;font-weight:400;color:#1c2b33;">Edit</span><svg style="position:absolute;left:310.55px;top:222.2px;" width="6.5" height="4" viewBox="0 0 6.5 4"><path d="M0 0H6.5L3.25 4Z" fill="#1c2b33"/></svg><div style="position:absolute;left:333.5px;top:211.5px;width:28.30000000000001px;height:24.900000000000006px;background:#fff;border:1px solid #d3d6db;border-radius:4px;box-sizing:border-box;"></div><svg style="position:absolute;left:342px;top:217.5px;" width="11.5" height="13" viewBox="0 0 11.5 13"><path d="M0.5 2.8H11M4 2.8V1H7.5V2.8M1.8 2.8L2.6 12.3H8.9L9.7 2.8" fill="none" stroke="#1c2b33" stroke-width="1.1" stroke-linejoin="round"/><path d="M4.4 5V10M7.1 5V10" stroke="#1c2b33" stroke-width="1"/></svg><div style="position:absolute;left:368px;top:214px;width:1px;height:20.5px;background:#e0e2e6;"></div><div style="position:absolute;left:374.4px;top:211.5px;width:28.200000000000045px;height:24.900000000000006px;background:#fff;border:1px solid #d3d6db;border-radius:4px;box-sizing:border-box;"></div><svg style="position:absolute;left:382.5px;top:217.5px;" width="12" height="13" viewBox="0 0 12 13"><path d="M4 0.8H8M4.8 0.8V5L1 11.5C0.7 12 1 12.3 1.5 12.3H10.5C11 12.3 11.3 12 11 11.5L7.2 5V0.8" fill="none" stroke="#1c2b33" stroke-width="1.1" stroke-linejoin="round"/><path d="M2.8 8.3H9.2L11 11.5C11.3 12 11 12.3 10.5 12.3H1.5C1 12.3 0.7 12 1 11.5Z" fill="#1c2b33"/></svg><div style="position:absolute;left:408.2px;top:211.5px;width:28.30000000000001px;height:24.900000000000006px;background:#fff;border:1px solid #d3d6db;border-radius:4px;box-sizing:border-box;"></div><svg style="position:absolute;left:415.8px;top:217.5px;" width="13" height="13" viewBox="0 0 13 13"><path d="M1 1.5V6L7.2 12.2L12.2 7.2L6 1H1.5Z" fill="none" stroke="#1c2b33" stroke-width="1.1" stroke-linejoin="round"/><circle cx="4.2" cy="4.2" r="1.2" fill="none" stroke="#1c2b33" stroke-width="1"/></svg><span class="t r" style="transform:scaleX(0.9742);transform-origin:left center;left:454px;top:221px;font-size:10.37px;line-height:10.37px;font-weight:400;color:#1c2b33;">More</span><svg style="position:absolute;left:486.35px;top:222.2px;" width="6.5" height="4" viewBox="0 0 6.5 4"><path d="M0 0H6.5L3.25 4Z" fill="#1c2b33"/></svg><div style="position:absolute;left:568.6px;top:211.4px;width:156.0px;height:25.400000000000006px;background:#fff;border:1px solid #d3d6db;border-radius:4px;box-sizing:border-box;"></div><svg style="position:absolute;left:577.5px;top:219.3px;" width="11.5" height="10" viewBox="0 0 11.5 10"><rect x="0" y="0" width="2.6" height="10" fill="#1c2b33"/><rect x="4.4" y="0" width="2.6" height="10" fill="#1c2b33"/><rect x="8.8" y="0" width="2.6" height="10" fill="#1c2b33"/></svg><span class="t r" style="transform:scaleX(0.9912);transform-origin:left center;left:594.4px;top:221px;font-size:10.37px;line-height:10.37px;font-weight:400;color:#1c2b33;">Columns: Performance</span><svg style="position:absolute;left:707.35px;top:222.2px;" width="6.5" height="4" viewBox="0 0 6.5 4"><path d="M0 0H6.5L3.25 4Z" fill="#1c2b33"/></svg><div style="position:absolute;left:731px;top:211.4px;width:103.20000000000005px;height:25.400000000000006px;background:#fff;border:1px solid #d3d6db;border-radius:4px;box-sizing:border-box;"></div><svg style="position:absolute;left:740px;top:219px;" width="11" height="10.5" viewBox="0 0 11 10.5"><rect x="0" y="0" width="11" height="2.2" fill="#1c2b33"/><rect x="2.8" y="4.1" width="8.2" height="2.2" fill="#1c2b33"/><rect x="2.8" y="8.2" width="8.2" height="2.2" fill="#1c2b33"/></svg><span class="t r" style="transform:scaleX(0.9840);transform-origin:left center;left:757.4px;top:221px;font-size:10.37px;line-height:10.37px;font-weight:400;color:#1c2b33;">Breakdown</span><svg style="position:absolute;left:815.25px;top:222.2px;" width="6.5" height="4" viewBox="0 0 6.5 4"><path d="M0 0H6.5L3.25 4Z" fill="#1c2b33"/></svg><div style="position:absolute;left:840.2px;top:211.4px;width:45.09999999999991px;height:25.400000000000006px;background:#fff;border:1px solid #d3d6db;border-radius:4px;box-sizing:border-box;"></div><svg style="position:absolute;left:847.5px;top:218px;" width="12.5" height="12.5" viewBox="0 0 12.5 12.5"><path d="M3 0.8H10.5V11H3Z" fill="#1c2b33"/><path d="M1 2.8V12H8.5" fill="none" stroke="#1c2b33" stroke-width="1.1"/><path d="M4.8 3.5H8.8M4.8 5.8H8.8" stroke="#fff" stroke-width="0.9"/></svg><svg style="position:absolute;left:868.35px;top:222.2px;" width="6.5" height="4" viewBox="0 0 6.5 4"><path d="M0 0H6.5L3.25 4Z" fill="#1c2b33"/></svg><div style="position:absolute;left:891.8px;top:211.4px;width:55.80000000000007px;height:25.400000000000006px;background:#fff;border:1px solid #d3d6db;border-radius:4px;box-sizing:border-box;"></div><div style="position:absolute;left:919.8px;top:212px;width:1.0px;height:24.30000000000001px;background:#d3d6db;"></div><svg style="position:absolute;left:900.5px;top:218.5px;" width="11.5" height="11.5" viewBox="0 0 11.5 11.5"><path d="M4.5 1H1V10.5H10.5V7" fill="none" stroke="#1c2b33" stroke-width="1.1" stroke-linejoin="round"/><path d="M6.5 1H10.5V5M10.5 1L5.2 6.3" fill="none" stroke="#1c2b33" stroke-width="1.1" stroke-linejoin="round"/></svg><svg style="position:absolute;left:930.55px;top:222.2px;" width="6.5" height="4" viewBox="0 0 6.5 4"><path d="M0 0H6.5L3.25 4Z" fill="#1c2b33"/></svg><div style="position:absolute;left:953.2px;top:211.4px;width:28.799999999999955px;height:25.19999999999999px;background:#fff;border:1px solid #d3d6db;border-radius:4px;box-sizing:border-box;"></div><svg style="position:absolute;left:961.6px;top:218.5px;" width="12" height="12" viewBox="0 0 12 12"><rect x="0.6" y="0.6" width="10.8" height="10.8" rx="1" fill="none" stroke="#1c2b33" stroke-width="1.1"/><path d="M2.5 8.8L5 5.6L6.6 7.2L9.3 3.5M7.5 3.4H9.4V5.3" fill="none" stroke="#1c2b33" stroke-width="1.1" stroke-linejoin="round"/></svg><div style="position:absolute;left:44px;top:242.8px;width:944px;height:1.0px;background:#dfe1e5;"></div><div style="position:absolute;left:44px;top:276.9px;width:944px;height:1.0px;background:#dfe1e5;"></div><div style="position:absolute;left:44px;top:277.9px;width:944px;height:33.10000000000002px;background:#e8f3fd;"></div><div style="position:absolute;left:44px;top:310.6px;width:944px;height:1.0px;background:#e2e7ed;"></div><div style="position:absolute;left:44px;top:364px;width:944px;height:1px;background:#e6e8eb;"></div><div style="position:absolute;left:78.2px;top:243.8px;width:1.0px;height:33.19999999999999px;background:#dfe1e5;"></div><div style="position:absolute;left:145.3px;top:243.8px;width:1.0px;height:33.19999999999999px;background:#dfe1e5;"></div><div style="position:absolute;left:481.1px;top:243.8px;width:1.0px;height:33.19999999999999px;background:#dfe1e5;"></div><div style="position:absolute;left:585.2px;top:243.8px;width:1.0px;height:33.19999999999999px;background:#dfe1e5;"></div><div style="position:absolute;left:689.2px;top:243.8px;width:1.0px;height:33.19999999999999px;background:#dfe1e5;"></div><div style="position:absolute;left:793.1px;top:243.8px;width:1.0px;height:33.19999999999999px;background:#dfe1e5;"></div><div style="position:absolute;left:897.4px;top:243.8px;width:1.0px;height:33.19999999999999px;background:#dfe1e5;"></div><div style="position:absolute;left:977.4px;top:243.8px;width:1.0px;height:33.19999999999999px;background:#dfe1e5;"></div><div style="position:absolute;left:374.3px;top:243.8px;width:3.0px;height:121.19999999999999px;background:linear-gradient(90deg,#dadde1 0%,#dfe1e4 33%,#eff0f2 66%,rgba(247,248,249,0.5) 100%);"></div><div style="position:absolute;left:53.2px;top:252.3px;width:16.299999999999997px;height:16.30000000000001px;background:#fff;border:1px solid #c9ccd1;border-radius:3px;box-sizing:border-box;"></div><svg style="position:absolute;left:56.800000000000004px;top:256.90000000000003px;" width="9.5" height="7.5" viewBox="0 0 9.5 7.5"><path d="M0.8 3.8L3.4 6.4L8.8 1" fill="none" stroke="#1a72bb" stroke-width="1.5" stroke-linecap="round" stroke-linejoin="round"/></svg><div style="position:absolute;left:53.2px;top:286.1px;width:16.299999999999997px;height:16.30000000000001px;background:#fff;border:1px solid #c9ccd1;border-radius:3px;box-sizing:border-box;"></div><svg style="position:absolute;left:56.800000000000004px;top:290.70000000000005px;" width="9.5" height="7.5" viewBox="0 0 9.5 7.5"><path d="M0.8 3.8L3.4 6.4L8.8 1" fill="none" stroke="#1a72bb" stroke-width="1.5" stroke-linecap="round" stroke-linejoin="round"/></svg><span class="t b" style="transform:scaleX(0.9430);transform-origin:left center;left:86.3px;top:256px;font-size:10.85px;line-height:10.85px;font-weight:700;color:#1c2b33;">Off / On</span><span class="t b" style="transform:scaleX(0.8680);transform-origin:left center;left:153.4px;top:256px;font-size:10.85px;line-height:10.85px;font-weight:700;color:#1c2b33;">Campaign</span><svg style="position:absolute;left:361.9px;top:259.29999999999995px;" width="5.2" height="3.2" viewBox="0 0 5.2 3.2"><path d="M0 0H5.2L2.6 3.2Z" fill="#1c2b33"/></svg><span class="t b" style="transform:scaleX(0.8680);transform-origin:left center;left:391px;top:256px;font-size:10.85px;line-height:10.85px;font-weight:700;color:#1c2b33;">Results</span><svg style="position:absolute;left:469.79999999999995px;top:259.29999999999995px;" width="5.2" height="3.2" viewBox="0 0 5.2 3.2"><path d="M0 0H5.2L2.6 3.2Z" fill="#1c2b33"/></svg><span class="t b" style="transform:scaleX(0.8599);transform-origin:left center;left:489.2px;top:256px;font-size:10.85px;line-height:10.85px;font-weight:700;color:#1c2b33;">Reach</span><svg style="position:absolute;left:573.9px;top:259.29999999999995px;" width="5.2" height="3.2" viewBox="0 0 5.2 3.2"><path d="M0 0H5.2L2.6 3.2Z" fill="#1c2b33"/></svg><span class="t b" style="transform:scaleX(0.8640);transform-origin:left center;left:593.4px;top:256px;font-size:10.85px;line-height:10.85px;font-weight:700;color:#1c2b33;">Impressions</span><svg style="position:absolute;left:677.9px;top:259.29999999999995px;" width="5.2" height="3.2" viewBox="0 0 5.2 3.2"><path d="M0 0H5.2L2.6 3.2Z" fill="#1c2b33"/></svg><span class="t b" style="transform:scaleX(0.8846);transform-origin:left center;left:697.2px;top:256px;font-size:10.85px;line-height:10.85px;font-weight:700;color:#1c2b33;">Cost per result</span><svg style="position:absolute;left:781.6999999999999px;top:259.29999999999995px;" width="5.2" height="3.2" viewBox="0 0 5.2 3.2"><path d="M0 0H5.2L2.6 3.2Z" fill="#1c2b33"/></svg><span class="t b" style="transform:scaleX(0.8972);transform-origin:left center;left:801.4px;top:256px;font-size:10.85px;line-height:10.85px;font-weight:700;color:#1c2b33;">Amount spent</span><svg style="position:absolute;left:886.0px;top:259.29999999999995px;" width="5.2" height="3.2" viewBox="0 0 5.2 3.2"><path d="M0 0H5.2L2.6 3.2Z" fill="#1c2b33"/></svg><span class="t b" style="transform:scaleX(0.8674);transform-origin:left center;left:905.4px;top:256px;font-size:10.85px;line-height:10.85px;font-weight:700;color:#1c2b33;">Ends</span><svg style="position:absolute;left:966.1999999999999px;top:259.29999999999995px;" width="5.2" height="3.2" viewBox="0 0 5.2 3.2"><path d="M0 0H5.2L2.6 3.2Z" fill="#1c2b33"/></svg><svg style="position:absolute;left:985px;top:255px;" width="4" height="10" viewBox="0 0 4 10"><path d="M3.5 0.5C1 3 1 7 3.5 9.5" fill="none" stroke="#c9ccd1" stroke-width="1"/></svg><div style="position:absolute;left:98.8px;top:286.5px;width:26.200000000000003px;height:15.0px;background:#e3e6ea;border-radius:8px;"></div><div style="position:absolute;left:111px;top:286.9px;width:14.2px;height:14.2px;border-radius:50%;background:#1178c4;"></div><span class="t r" style="transform:scaleX(0.9415);transform-origin:left center;left:151.5px;top:285px;font-size:10.37px;line-height:10.37px;font-weight:400;color:#1a6db5;">Samina1</span><span class="t r" style="transform:scaleX(1.0117);transform-origin:right center;right:548.3px;top:285px;font-size:10.37px;line-height:10.37px;font-weight:400;color:#1c2b33;text-decoration:underline dotted #6b7378;text-underline-offset:2px;">308</span><span class="t r" style="transform:scaleX(0.9235);transform-origin:right center;right:548.3px;top:298px;font-size:9.12px;line-height:9.12px;font-weight:400;color:#6c7479;">Follows or likes</span><span class="t r" style="transform:scaleX(0.9446);transform-origin:right center;right:444.4px;top:285px;font-size:10.37px;line-height:10.37px;font-weight:400;color:#1c2b33;">4,137</span><span class="t r" style="transform:scaleX(0.9639);transform-origin:right center;right:340.29999999999995px;top:285px;font-size:10.37px;line-height:10.37px;font-weight:400;color:#1c2b33;">6,671</span><span class="t r" style="transform:scaleX(1.0410);transform-origin:right center;right:236.5px;top:285px;font-size:10.37px;line-height:10.37px;font-weight:400;color:#1c2b33;">$0.05</span><span class="t r" style="transform:scaleX(0.9302);transform-origin:right center;right:236.5px;top:298px;font-size:9.12px;line-height:9.12px;font-weight:400;color:#6c7479;">Per Follow or like</span><span class="t r" style="transform:scaleX(0.9941);transform-origin:right center;right:132.29999999999995px;top:285px;font-size:10.37px;line-height:10.37px;font-weight:400;color:#1c2b33;">$14.09</span><span class="t r" style="transform:scaleX(0.8986);transform-origin:right center;right:52px;top:283px;font-size:9.6px;line-height:9.6px;font-weight:400;color:#1c2b33;">Sep 5, 2025</span><span class="t r" style="transform:scaleX(0.9688);transform-origin:left center;left:155px;top:320px;font-size:10.37px;line-height:10.37px;font-weight:400;color:#1c2b33;">Results from 1 campaign</span><svg style="position:absolute;left:268.9px;top:318.3px;" width="9.6" height="9.6" viewBox="0 0 9.6 9.6"><circle cx="4.8" cy="4.8" r="4.8" fill="#1c2b33"/><circle cx="4.8" cy="2.6" r="0.8" fill="#fff"/><path d="M4.8 4.2V7.4" stroke="#fff" stroke-width="1.3"/></svg><span class="t r" style="transform:scaleX(1.0117);transform-origin:right center;right:547.3px;top:320px;font-size:10.37px;line-height:10.37px;font-weight:400;color:#1c2b33;">308</span><span class="t r" style="transform:scaleX(0.9235);transform-origin:right center;right:547.3px;top:333px;font-size:9.12px;line-height:9.12px;font-weight:400;color:#6c7479;">Follows or likes</span><span class="t r" style="transform:scaleX(0.9446);transform-origin:right center;right:442.29999999999995px;top:320px;font-size:10.37px;line-height:10.37px;font-weight:400;color:#1c2b33;text-decoration:underline dotted #6b7378;text-underline-offset:2px;">4,137</span><span class="t r" style="transform:scaleX(0.9047);transform-origin:left center;left:489.3px;top:333px;font-size:9.12px;line-height:9.12px;font-weight:400;color:#6c7479;">Accounts Center acco...</span><span class="t r" style="transform:scaleX(0.9639);transform-origin:right center;right:338.79999999999995px;top:320px;font-size:10.37px;line-height:10.37px;font-weight:400;color:#1c2b33;">6,671</span><span class="t r" style="transform:scaleX(1.0130);transform-origin:right center;right:338.79999999999995px;top:333px;font-size:9.12px;line-height:9.12px;font-weight:400;color:#6c7479;">Total</span><span class="t r" style="transform:scaleX(1.0410);transform-origin:right center;right:235px;top:320px;font-size:10.37px;line-height:10.37px;font-weight:400;color:#1c2b33;">$0.05</span><span class="t r" style="transform:scaleX(0.9302);transform-origin:right center;right:235px;top:333px;font-size:9.12px;line-height:9.12px;font-weight:400;color:#6c7479;">Per Follow or like</span><span class="t r" style="transform:scaleX(0.9941);transform-origin:right center;right:130.60000000000002px;top:320px;font-size:10.37px;line-height:10.37px;font-weight:400;color:#1c2b33;">$14.09</span><span class="t r" style="transform:scaleX(0.9759);transform-origin:right center;right:130.60000000000002px;top:333px;font-size:9.12px;line-height:9.12px;font-weight:400;color:#6c7479;">Total spent</span><div style="position:absolute;left:383.6px;top:367.2px;width:592.1px;height:4.600000000000023px;background:#c2c4c7;border-radius:3px;"></div>
</body></html>
